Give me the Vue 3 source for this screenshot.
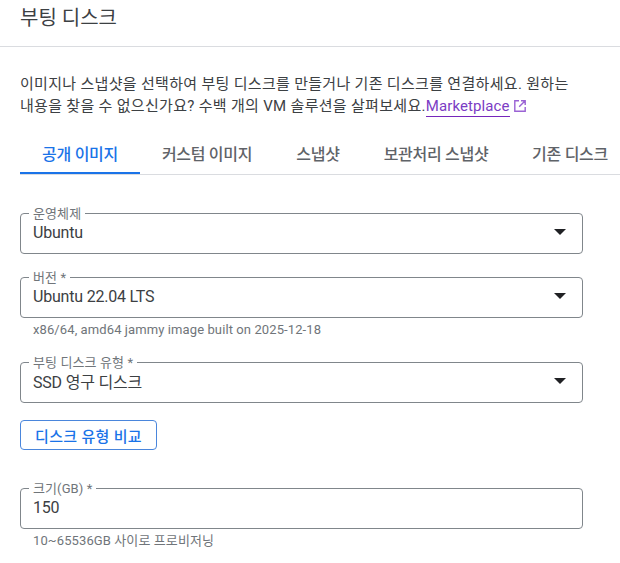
<script setup>
const tabs = [
  { label: '공개 이미지', active: true, w: 120 },
  { label: '커스텀 이미지', w: 134 },
  { label: '스냅샷', w: 88 },
  { label: '보관처리 스냅샷', w: 148 },
  { label: '기존 디스크', w: 120 },
]
</script>

<template>
  <div class="page">
    <header class="head"><h1>부팅 디스크</h1></header>
    <p class="intro">
      이미지나 스냅샷을 선택하여 부팅 디스크를 만들거나 기존 디스크를 연결하세요. 원하는<br>내용을 찾을 수 없으신가요? 수백 개의 VM 솔루션을 살펴보세요.<a class="link">Marketplace</a><svg class="ext" width="14" height="14" viewBox="0 0 14 14"><path d="M6 1.8H1.8v10.4h10.4V8M8 1.8h4.2V6M12.2 1.8 6.2 7.8" fill="none" stroke="#9a62d4" stroke-width="1.4"/></svg>
    </p>
    <nav class="tabs">
      <div v-for="t in tabs" :key="t.label" class="tab" :class="{ on: t.active }" :style="{ width: t.w + 'px' }">{{ t.label }}</div>
    </nav>

    <div class="field first">
      <span class="lab">운영체제</span>
      <span class="val">Ubuntu</span>
      <i class="arrow"></i>
    </div>
    <div class="field second">
      <span class="lab">버전 *</span>
      <span class="val">Ubuntu 22.04 LTS</span>
      <i class="arrow"></i>
    </div>
    <div class="hint">x86/64, amd64 jammy image built on 2025-12-18</div>
    <div class="field third">
      <span class="lab">부팅 디스크 유형 *</span>
      <span class="val">SSD 영구 디스크</span>
      <i class="arrow"></i>
    </div>
    <button class="btn">디스크 유형 비교</button>
    <div class="field fourth">
      <span class="lab">크기(GB) *</span>
      <span class="val num">150</span>
    </div>
    <div class="hint">10~65536GB 사이로 프로비저닝</div>
  </div>
</template>

<style>
html, body { margin: 0; background: #fff; overflow: hidden; }
</style>

<style scoped>
.page {
  width: 620px;
  height: 563px;
  overflow: hidden;
  font-family: Roboto, "Noto Sans CJK KR", sans-serif;
  color: #202124;
}
.head {
  height: 46px;
  border-bottom: 1px solid #dadce0;
  padding-left: 20px;
}
h1 {
  margin: 0;
  font-size: 20px;
  font-weight: 400;
  line-height: 36px;
  color: #3c4043;
}
.intro {
  margin: 26px 0 0 20px;
  width: 590px;
  white-space: nowrap;
  font-size: 15px;
  line-height: 22px;
  letter-spacing: 0.31px;
  color: #3c4043;
}
.link {
  color: #7b3cc4;
  border-bottom: 1px solid #7627bb;
  padding-bottom: 1px;
  letter-spacing: 0.1px;
}
.ext { vertical-align: -2px; margin-left: 3px; }
.tabs {
  display: flex;
  margin: 19px 0 0 20px;
  border-bottom: 1px solid #dadce0;
  height: 38px;
  overflow: hidden;
}
.tab {
  flex: none;
  box-sizing: border-box;
  height: 38px;
  line-height: 38px;
  text-align: center;
  font-size: 16px;
  font-weight: 500;
  letter-spacing: -0.3px;
  color: #5f6368;
  white-space: nowrap;
}
.tab.on {
  color: #1a73e8;
  border-bottom: 2px solid #1a73e8;
}
.field {
  position: relative;
  box-sizing: border-box;
  width: 563px;
  height: 41px;
  margin-left: 20px;
  border: 1px solid #80868b;
  border-radius: 4px;
  display: flex;
  align-items: center;
  padding: 0 12px 3px;
}
.first { margin-top: 38px; }
.second { margin-top: 23px; }
.third { margin-top: 24px; }
.fourth { margin-top: 38px; }
.lab {
  position: absolute;
  left: 8px;
  top: -8px;
  padding: 0 4px;
  background: #fff;
  font-size: 13px;
  line-height: 15px;
  letter-spacing: 0.1px;
  color: #70757a;
}
.val { font-size: 16px; letter-spacing: -0.2px; color: #3c4043; }
.num { color: #3c4043; }
.arrow {
  position: absolute;
  right: 16px;
  top: 15px;
  width: 0;
  height: 0;
  border-left: 6px solid transparent;
  border-right: 6px solid transparent;
  border-top: 6px solid #202124;
}
.hint {
  margin: 4px 0 0 33px;
  font-size: 13px;
  line-height: 16px;
  letter-spacing: 0.1px;
  color: #70757a;
}
.btn {
  display: block;
  box-sizing: border-box;
  margin: 17px 0 0 20px;
  width: 137px;
  height: 30px;
  padding: 0;
  background: #fff;
  border: 1px solid #4a86dc;
  border-radius: 4px;
  font: 500 15px Roboto, "Noto Sans CJK KR", sans-serif;
  letter-spacing: 0.3px;
  color: #1a73e8;
}
</style>
